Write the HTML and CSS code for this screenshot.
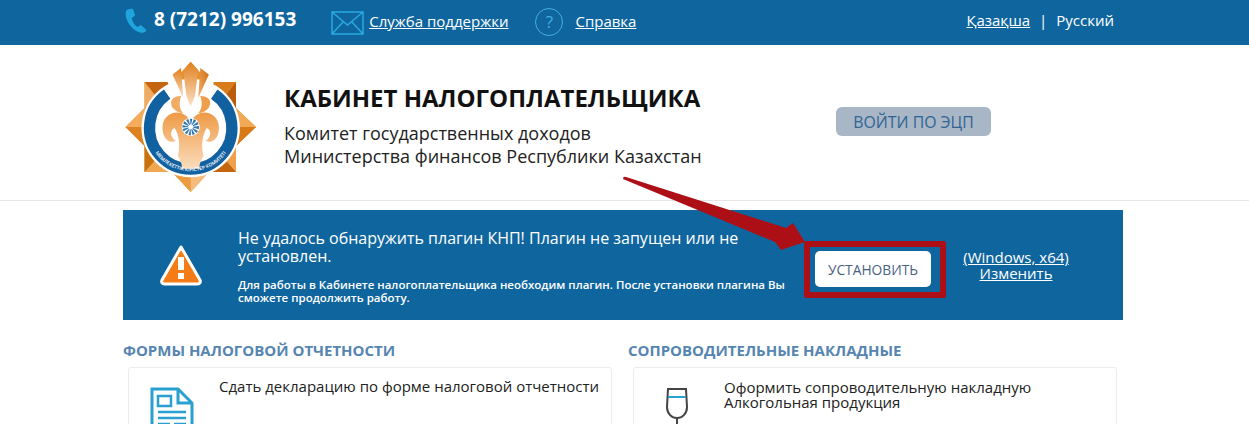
FILE: index.html
```html
<!DOCTYPE html>
<html lang="ru">
  <head>
    <meta charset="UTF-8" />
    <meta name="viewport" content="width=device-width, initial-scale=1.0" />
    <title>Кабинет налогоплательщика</title>
    <link rel="stylesheet" href="styles.css">
  </head>
  <body>
    <div class="topbar">
      <div class="wrap topRow">
        <svg class="phoneIcon" viewBox="0 0 24 24" width="25" height="25"><path d="M5.200 1.200 8.400 .6c.6-.1 1 .2 1.200 .7l1.800 5c.2 .5 0 1-.4 1.300L8.400 9.600c.5 3.400 2.800 7 5.400 8.700l2.600-1.600c.5-.3 1-.2 1.400 .2l4.300 4c.4 .4 .4 .9 .1 1.300-1.300 1.400-3.200 2-5.200 1.500C9.500 21.900 1.800 12.600 2.600 4.200 2.800 2.700 3.800 1.500 5.200 1.200Z" fill="#1fa5dc"/></svg>
        <span class="phone">8 (7212) 996153</span>
        <svg class="mailIcon" viewBox="0 0 33 24" width="33" height="24"><path d="M1 1h31v22H1ZM1 1l15.500 13L32 1M1 23l11.500-12.500M32 23 20.500 10.500" fill="none" stroke="#29a9df" stroke-width="1.500"/></svg>
        <a class="topLink" href="#">Служба поддержки</a>
        <span class="helpIcon">?</span>
        <a class="topLink" href="#">Справка</a>
        <div class="lang">
          <a class="topLink" href="#">Қазақша</a>
          <span class="langSep">|</span>
          <span>Русский</span>
        </div>
      </div>
    </div>

    <header class="siteHead">
      <div class="wrap headRow">
        <svg class="logo" viewBox="0 0 131 133" width="131" height="133">
          <defs>
            <linearGradient id="flame" x1="0" y1="0" x2="0" y2="1">
              <stop offset="0" stop-color="#e07f1c"/>
              <stop offset="1" stop-color="#fbe3c8"/>
            </linearGradient>
            <linearGradient id="flameDark" x1="1" y1="0" x2="0" y2="1">
              <stop offset="0" stop-color="#d06f12"/>
              <stop offset="1" stop-color="#f3b06c"/>
            </linearGradient>
            <linearGradient id="tree" x1="0" y1="0" x2="0" y2="1">
              <stop offset="0" stop-color="#ee9a45"/>
              <stop offset="1" stop-color="#fbdcbc"/>
            </linearGradient>
          </defs>
          <path d="M65.700 1 84 21H111V47L131 66 111 85V111H84L65.700 131 47 111H19.500V85L.5 66 19.500 47V21H47Z" fill="#e8912c"/>
          <path d="M19.500 21H50L33 38Z" fill="#c4660f"/>
          <path d="M19.500 21 33 38 19.500 47Z" fill="#f0ab62"/>
          <path d="M111 21H81L98 38Z" fill="#d97c1d"/>
          <path d="M111 21 98 38 111 47Z" fill="#b95d0c"/>
          <path d="M.5 66 19.500 47 26 66Z" fill="#f3ad5c"/>
          <path d="M.5 66 19.500 85 26 66Z" fill="#dd8220"/>
          <path d="M131 66 111 47 105 66Z" fill="#f2a954"/>
          <path d="M131 66 111 85 105 66Z" fill="#d97a18"/>
          <path d="M19.500 111H47L33 96Z" fill="#f0a850"/>
          <path d="M19.500 111 33 96 19.500 85Z" fill="#c9700f"/>
          <path d="M111 111H84L98 96Z" fill="#c4660f"/>
          <path d="M111 111 98 96 111 85Z" fill="#eea04a"/>
          <path d="M65.700 131 47 111H65.700Z" fill="#ec9c40"/>
          <path d="M65.700 131 84 111H65.700Z" fill="#f7bc7c"/>
          <g transform="translate(65.700 67) scale(1.070) translate(-61 -66)">
            <circle cx="61" cy="66" r="46" fill="#fff"/>
            <path d="M39 34.400A38.500 38.500 0 1 0 83 34.400" fill="none" stroke="#11609f" stroke-width="10.500"/>
            <path d="M38 20 43 14 56 38 57 54 50 48Z" fill="#fff"/>
            <path d="M84 20 79 14 66 38 65 54 72 48Z" fill="#fff"/>
            <path d="M61 4 68 12 65 36 61 46 57 36 54 12Z" fill="url(#flame)"/>
            <path d="M70 10 78 16 68 38Z" fill="url(#flameDark)"/>
            <path d="M52 10 44 16 54 38Z" fill="url(#flame)"/>
            <path d="M44 47C40 39 46 36 52 36 50 42 50 48 54 52 50 52 47 50 44 47Z" fill="#f2ab64"/>
            <path d="M78 47C82 39 76 36 70 36 72 42 72 48 68 52 72 52 75 50 78 47Z" fill="#ef9f4c"/>
            <path d="M61 60C54 47 38 50 35 62 33 72 39 82 47 78 42 75 41 68 46 66 51 74 51 85 49 92 52 98 54 102 52 104H70C68 102 70 98 73 92 71 85 71 74 76 66 81 68 80 75 75 78 83 82 89 72 87 62 84 50 68 47 61 60Z" fill="url(#tree)"/>
            <circle cx="61" cy="65" r="8.500" fill="#fff"/>
            <circle cx="61" cy="65" r="5" fill="none" stroke="#2f76b0" stroke-width="5.500" stroke-dasharray="1.500 1"/>
            <path id="ringText" d="M23.400 81A40.500 40.500 0 0 0 98.600 81" fill="none"/>
            <text class="ringLabel"><textPath href="#ringText" startOffset="50%" text-anchor="middle">МЕМЛЕКЕТТІК КІРІСТЕР КОМИТЕТІ</textPath></text>
          </g>
        </svg>
        <div class="headText">
          <h1>КАБИНЕТ НАЛОГОПЛАТЕЛЬЩИКА</h1>
          <p>Комитет государственных доходов<br>Министерства финансов Республики Казахстан</p>
        </div>
        <button class="loginBtn">ВОЙТИ ПО ЭЦП</button>
      </div>
    </header>

    <main class="wrap">
      <section class="banner">
        <div class="warnBox">
          <svg viewBox="0 0 46 44" width="46" height="44"><path d="M23 4 42 37c.9 2 0 4-2.500 4H6.500C4 41 3.100 39 4 37Z" fill="#f57c14" stroke="#fff" stroke-width="3" stroke-linejoin="round"/><path d="M20 14h6v13h-6ZM20 30h6v6h-6Z" fill="#fff"/></svg>
        </div>
        <div class="bannerText">
          <p class="bannerTitle">Не удалось обнаружить плагин КНП! Плагин не запущен или не установлен.</p>
          <p class="bannerNote">Для работы в Кабинете налогоплательщика необходим плагин. После установки плагина Вы сможете продолжить работу.</p>
        </div>
        <div class="installBox">
          <button class="installBtn">УСТАНОВИТЬ</button>
        </div>
        <div class="version">
          <a href="#">(Windows, x64)</a><br>
          <a href="#">Изменить</a>
        </div>
      </section>

      <div class="columns">
        <section>
          <h2>ФОРМЫ НАЛОГОВОЙ ОТЧЕТНОСТИ</h2>
          <div class="card">
            <svg class="cardIcon" viewBox="0 0 44 60" width="44" height="60"><path d="M2 2H28L42 16V58H2Z" fill="none" stroke="#29a0cf" stroke-width="3"/><path d="M28 2V16H42" fill="none" stroke="#29a0cf" stroke-width="3"/><path d="M8 9H21V19H8Z" fill="none" stroke="#29a0cf" stroke-width="2.500"/><path d="M8 25H36M8 31H36M8 37H20M24 37H36" stroke="#29a0cf" stroke-width="2.500"/><path d="M8 42H36V50H8Z" fill="#4a4a4a"/></svg>
            <p>Сдать декларацию по форме налоговой отчетности</p>
          </div>
        </section>
        <section>
          <h2>СОПРОВОДИТЕЛЬНЫЕ НАКЛАДНЫЕ</h2>
          <div class="card">
            <svg class="cardIcon glass" viewBox="0 0 24 60" width="24" height="60"><path d="M3 2H21L22 20C22 27 17 31 12 31 7 31 2 27 2 20Z" fill="none" stroke="#444" stroke-width="2"/><path d="M3 10H21" stroke="#29a0cf" stroke-width="2"/><path d="M12 31V60" stroke="#444" stroke-width="2"/></svg>
            <p>Оформить сопроводительную накладную<br>Алкогольная продукция</p>
          </div>
        </section>
      </div>
    </main>

    <svg class="arrow" viewBox="0 0 184 76" width="184" height="76"><path d="M0 3Q0 0 3 1L163 52 170 47 182 66 158 74 152 66Z" fill="#ad0f16"/></svg>
    <div class="redFrame"></div>
  </body>
</html>
```

FILE: styles.css
```css
html,
body {
  height: 424px;
  overflow: hidden;
}

body {
  position: relative;
  margin: 0;
  padding: 0;
  font-family: "Open Sans", sans-serif;
  color: #222;
  background: #fff;
}

.wrap {
  width: 1000px;
  margin: 0 0 0 123px;
}

/* verhnyaya polosa */
.topbar {
  height: 45px;
  background: #0f669f;
  color: #fff;
}

.topRow {
  display: flex;
  align-items: center;
  height: 42px;
  font-size: 15px;
}

.phoneIcon {
  margin: 0 6px 2px 0;
}

.phone {
  font-size: 19px;
  font-weight: 700;
  margin: 0 35px 4px 0;
}

.mailIcon {
  margin-right: 5px;
  margin-top: 3px;
}

.topLink {
  color: #fff;
  text-decoration: underline;
}

.helpIcon {
  width: 26px;
  height: 26px;
  margin: 2px 12px 0 27px;
  border: 1px solid #45aee0;
  border-radius: 50%;
  color: #45aee0;
  font-size: 17px;
  line-height: 26px;
  text-align: center;
}

.lang {
  margin: 0 0 2px auto;
  padding-right: 9px;
}

.langSep {
  margin: 0 5px;
}

/* shapka */
.siteHead {
  height: 155px;
  border-bottom: 1px solid #e6e6e6;
}

.headRow {
  display: flex;
  align-items: flex-start;
}

.logo {
  margin: 16px 0 0 2px;
  flex: none;
}

.headText {
  margin: 38px 0 0 28px;
  width: 552px;
}

h1 {
  margin: 0;
  font-size: 24px;
  line-height: 30px;
  font-weight: 700;
  color: #111;
}

.headText p {
  margin: 9px 0 0;
  font-size: 18px;
  line-height: 23px;
}

.loginBtn {
  width: 155px;
  height: 29px;
  margin-top: 62px;
  border: 0;
  border-radius: 6px;
  background: #a8b6c5;
  color: #2f6494;
  font-family: inherit;
  font-size: 15.800px;
}

/* plashka */
.banner {
  display: flex;
  height: 110px;
  margin-top: 9px;
  background: #0f669f;
  color: #fff;
}

.warnBox {
  width: 115px;
  flex: none;
  display: flex;
  justify-content: center;
  padding-top: 33px;
  box-sizing: border-box;
}

.bannerText {
  width: 553px;
  flex: none;
  padding-top: 19px;
}

.bannerTitle {
  margin: 0;
  font-size: 16px;
  line-height: 18px;
}

.bannerNote {
  margin: 13px 0 0;
  font-size: 11.500px;
  line-height: 13px;
  font-weight: 600;
}

.installBox {
  width: 116px;
  margin-left: 24px;
  padding-top: 41px;
  flex: none;
}

.installBtn {
  width: 116px;
  height: 36px;
  border: 0;
  border-radius: 5px;
  background: #fff;
  color: #4a6285;
  font-family: inherit;
  font-size: 13.800px;
}

.version {
  flex: 1;
  padding: 39px 40px 0 18px;
  font-size: 15px;
  line-height: 16px;
  text-align: center;
}

.version a {
  color: #fff;
}

/* nizhnie bloki */
.columns {
  display: grid;
  grid-template-columns: 505px 495px;
  margin-top: 20px;
}

h2 {
  margin: 0;
  font-size: 15px;
  line-height: 20px;
  font-weight: 700;
  color: #5585b0;
}

.card {
  display: flex;
  width: 484px;
  height: 100px;
  margin: 7px 0 0 5px;
  box-sizing: border-box;
  border: 1px solid #ececec;
  border-radius: 3px;
}

.cardIcon {
  flex: none;
  margin: 19px 0 0 21px;
}

.glass {
  margin-left: 31px;
  margin-right: 10px;
}

.card p {
  margin: 11px 0 0 25px;
  font-size: 15px;
  line-height: 15px;
}

.glass + p {
  margin-top: 12px;
}

/* logo */
.ringLabel {
  font-size: 4.600px;
  font-weight: 600;
  fill: #fff;
}

/* strelka i ramka poverh */
.arrow {
  position: absolute;
  left: 623px;
  top: 176px;
}

.redFrame {
  position: absolute;
  left: 804px;
  top: 241px;
  width: 130px;
  height: 45px;
  border: 6px solid #ad0f16;
  border-radius: 2px;
}
```
